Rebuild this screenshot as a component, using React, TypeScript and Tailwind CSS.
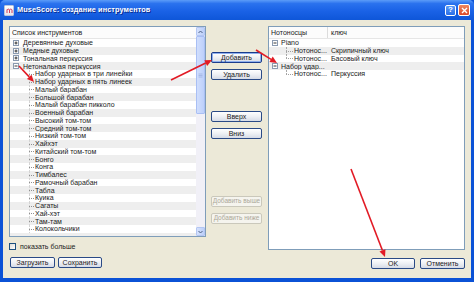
import React from "react";

const leftRows: { t: string; lvl: 0 | 1; box?: "+" | "-" }[] = [
  { t: "Деревянные духовые", lvl: 0, box: "+" },
  { t: "Медные духовые", lvl: 0, box: "+" },
  { t: "Тональная перкуссия", lvl: 0, box: "+" },
  { t: "Нетональная перкуссия", lvl: 0, box: "-" },
  { t: "Набор ударных в три линейки", lvl: 1 },
  { t: "Набор ударных в пять линеек", lvl: 1 },
  { t: "Малый барабан", lvl: 1 },
  { t: "Большой барабан", lvl: 1 },
  { t: "Малый барабан пикколо", lvl: 1 },
  { t: "Военный барабан", lvl: 1 },
  { t: "Высокий том-том", lvl: 1 },
  { t: "Средний том-том", lvl: 1 },
  { t: "Низкий том-том", lvl: 1 },
  { t: "Хайхэт", lvl: 1 },
  { t: "Китайский том-том", lvl: 1 },
  { t: "Бонго", lvl: 1 },
  { t: "Конга", lvl: 1 },
  { t: "Тимбалес", lvl: 1 },
  { t: "Рамочный барабан", lvl: 1 },
  { t: "Табла", lvl: 1 },
  { t: "Куика", lvl: 1 },
  { t: "Сагаты", lvl: 1 },
  { t: "Хай-хэт", lvl: 1 },
  { t: "Там-там", lvl: 1 },
  { t: "Колокольчики", lvl: 1 },
];

function ExpBox({ sign }: { sign: "+" | "-" }) {
  return (
    <svg width="6" height="6" viewBox="0 0 6 6" className="shrink-0">
      <rect x="0.5" y="0.5" width="5" height="5" fill="#fff" stroke="#8a9ab0" />
      <line x1="1.5" y1="3" x2="4.5" y2="3" stroke="#222" strokeWidth="0.9" />
      {sign === "+" && <line x1="3" y1="1.5" x2="3" y2="4.5" stroke="#222" strokeWidth="0.9" />}
    </svg>
  );
}

function XPButton({ label, w, disabled, focus }: { label: string; w: string; disabled?: boolean; focus?: boolean }) {
  if (disabled) {
    return (
      <div className={`${w} h-[11px] flex items-center justify-center rounded-[2px] border border-[#cac8bb] bg-[#f5f4ee] text-[6.5px] text-[#aca899] leading-none`}>
        {label}
      </div>
    );
  }
  return (
    <div
      className={`${w} h-[11px] flex items-center justify-center rounded-[2px] border ${
        focus ? "border-[#1a3c8c] shadow-[inset_0_0_0_1px_#8fb0ee]" : "border-[#2a4a86]"
      } bg-[linear-gradient(#ffffff,#eef0f4_50%,#d6dbe6)] text-[7px] text-[#222] leading-none`}
    >
      {label}
    </div>
  );
}

function Arrow({ x1, y1, x2, y2 }: { x1: number; y1: number; x2: number; y2: number }) {
  const dx = x2 - x1;
  const dy = y2 - y1;
  const len = Math.sqrt(dx * dx + dy * dy);
  const ux = dx / len;
  const uy = dy / len;
  const hl = 7;
  const hw = 3.2;
  const bx = x2 - ux * hl;
  const by = y2 - uy * hl;
  const p1 = `${x2},${y2}`;
  const p2 = `${bx - uy * hw},${by + ux * hw}`;
  const p3 = `${bx + uy * hw},${by - ux * hw}`;
  return (
    <g>
      <line x1={x1} y1={y1} x2={bx} y2={by} stroke="#e21b25" strokeWidth="1.6" />
      <polygon points={`${p1} ${p2} ${p3}`} fill="#e21b25" />
    </g>
  );
}

export default function App() {
  return (
    <div className="relative w-[474px] h-[282px] overflow-hidden flex flex-col bg-[#0b52d6] font-['Liberation_Sans',Arial,sans-serif]">
      {/* title bar */}
      <div className="h-[20px] shrink-0 flex items-center bg-[linear-gradient(#5c9cf8,#2a72ee_18%,#1a62e6_55%,#0e56d8)] rounded-t-[5px]">
        <div className="ml-[4px] w-[10px] h-[11px] rounded-[1px] bg-[linear-gradient(#ffffff,#e8e4ea)] border border-[#b9c4dc] flex items-center justify-center">
          <svg width="7" height="7" viewBox="0 0 7 7">
            <path d="M1 6V2.5M1 3c1-1.2 2-1.2 2.5 0V6M3.5 3c1-1.2 2-1.2 2.5 0V6" stroke="#d33a5a" strokeWidth="1" fill="none" />
          </svg>
        </div>
        <span className="ml-[3px] text-[7.3px] font-bold text-white tracking-[0.1px] [text-shadow:1px_1px_0_#0a2a8a]">
          MuseScore: создание инструментов
        </span>
        <div className="ml-auto mr-[4px] flex items-center gap-[2px]">
          <div className="w-[11px] h-[11px] rounded-[2px] border border-white bg-[linear-gradient(#5a9af8,#2a6ee8)] flex items-center justify-center text-white text-[8px] font-bold leading-none">
            ?
          </div>
          <div className="w-[12px] h-[12px] rounded-[2px] border border-white bg-[linear-gradient(#f08860,#d8482a)] flex items-center justify-center">
            <svg width="7" height="7" viewBox="0 0 7 7">
              <path d="M1 1L6 6M6 1L1 6" stroke="#fff" strokeWidth="1.4" />
            </svg>
          </div>
        </div>
      </div>

      {/* body */}
      <div className="flex-1 mx-[3px] mb-[4px] bg-[#ece9d8] flex pt-[6px] px-[6px] text-[7px] text-[#222]">
        {/* left column */}
        <div className="w-[197px] flex flex-col">
          <div className="h-[211px] border border-[#7f9db9] bg-white flex overflow-hidden">
            <div className="flex-1 flex flex-col overflow-hidden">
              <div className="h-[12px] shrink-0 flex items-center pl-[2px] border-b border-[#e6e6e6] bg-[#fcfcfc] leading-none">
                Список инструментов
              </div>
              {leftRows.map((r, i) => (
                <div
                  key={i}
                  className={`h-[7.75px] shrink-0 flex items-center leading-none whitespace-nowrap relative ${
                    i % 2 === 1 ? "bg-[#eeeeee]" : "bg-white"
                  }`}
                >
                  {r.lvl === 0 ? (
                    <>
                      <div className="w-[13px] shrink-0 flex items-center pl-[3px]">
                        <ExpBox sign={r.box!} />
                      </div>
                      <span>{r.t}</span>
                    </>
                  ) : (
                    <>
                      <div className="w-[25px] h-full shrink-0 relative">
                        <span className="absolute left-[19px] top-0 h-full border-l border-dotted border-[#d4d4d4]" />
                        <span className="absolute left-[19px] top-1/2 w-[5px] border-t border-dotted border-[#909090]" />
                      </div>
                      <span>{r.t}</span>
                    </>
                  )}
                </div>
              ))}
              <div className="h-[7.75px] shrink-0 bg-[#eeeeee]" />
            </div>
            {/* scrollbar */}
            <div className="w-[9px] shrink-0 bg-[#f1f0f7] flex flex-col">
              <div className="h-[9px] shrink-0 bg-[linear-gradient(90deg,#d5e1fd,#bccff9)] border border-[#b3c6f3] rounded-[1px] flex items-center justify-center">
                <svg width="5" height="4" viewBox="0 0 5 4">
                  <path d="M0.5 3L2.5 1L4.5 3" stroke="#4d6185" strokeWidth="1" fill="none" />
                </svg>
              </div>
              <div className="h-[78px] shrink-0 bg-[linear-gradient(90deg,#d0defd,#bdd0fb)] border border-[#a9bff4] rounded-[1px] flex items-center justify-center">
                <svg width="5" height="5" viewBox="0 0 5 5">
                  <path d="M0.5 1H4.5M0.5 2.5H4.5M0.5 4H4.5" stroke="#9fb3e2" strokeWidth="0.8" />
                </svg>
              </div>
              <div className="flex-1" />
              <div className="h-[9px] shrink-0 bg-[linear-gradient(90deg,#d5e1fd,#bccff9)] border border-[#b3c6f3] rounded-[1px] flex items-center justify-center">
                <svg width="5" height="4" viewBox="0 0 5 4">
                  <path d="M0.5 1L2.5 3L4.5 1" stroke="#4d6185" strokeWidth="1" fill="none" />
                </svg>
              </div>
            </div>
          </div>
          <div className="mt-[6px] h-[7px] flex items-center gap-[4px]">
            <div className="w-[7px] h-[7px] border border-[#1c5180] bg-[linear-gradient(135deg,#dcdcd6,#ffffff)]" />
            <span className="leading-none">показать больше</span>
          </div>
          <div className="mt-[7px] flex gap-[3px] pl-[1px]">
            <XPButton label="Загрузить" w="w-[45px]" />
            <XPButton label="Сохранить" w="w-[44px]" />
          </div>
        </div>

        {/* middle column */}
        <div className="w-[62px] flex flex-col pl-[5px]">
          <div className="mt-[26px]">
            <XPButton label="Добавить" w="w-[51px]" focus />
          </div>
          <div className="mt-[6px]">
            <XPButton label="Удалить" w="w-[51px]" />
          </div>
          <div className="mt-[31px]">
            <XPButton label="Вверх" w="w-[51px]" />
          </div>
          <div className="mt-[6px]">
            <XPButton label="Вниз" w="w-[51px]" />
          </div>
          <div className="mt-[57px]">
            <XPButton label="Добавить выше" w="w-[51px]" disabled />
          </div>
          <div className="mt-[6px]">
            <XPButton label="Добавить ниже" w="w-[51px]" disabled />
          </div>
        </div>

        {/* right column */}
        <div className="w-[197px] flex flex-col">
          <div className="h-[224px] border border-[#7f9db9] bg-white flex flex-col overflow-hidden">
            <div className="h-[12px] shrink-0 flex items-center border-b border-[#e6e6e6] bg-[#fcfcfc] leading-none">
              <div className="w-[59px] h-full flex items-center pl-[2px] border-r border-[#dcdcdc]">Нотоносцы</div>
              <div className="pl-[3px]">ключ</div>
            </div>
            {[
              { a: "Piano", b: "", lvl: 0, i: 0 },
              { a: "Нотонос...", b: "Скрипичный ключ", lvl: 1, i: 1, last: false },
              { a: "Нотонос...", b: "Басовый ключ", lvl: 1, i: 2, last: true },
              { a: "Набор удар...", b: "", lvl: 0, i: 3 },
              { a: "Нотонос...", b: "Перкуссия", lvl: 1, i: 4, last: true },
            ].map((r) => (
              <div
                key={r.i}
                className={`h-[7.75px] shrink-0 flex items-center leading-none whitespace-nowrap ${
                  r.i % 2 === 1 ? "bg-[#eeeeee]" : "bg-white"
                }`}
              >
                <div className="w-[60px] shrink-0 h-full flex items-center">
                  {r.lvl === 0 ? (
                    <>
                      <div className="w-[12px] shrink-0 flex items-center pl-[3px]">
                        <ExpBox sign="-" />
                      </div>
                      <span>{r.a}</span>
                    </>
                  ) : (
                    <>
                      <div className="w-[25px] h-full shrink-0 relative">
                        <span
                          className={`absolute left-[17px] top-0 border-l border-dotted border-[#a8a8a8] ${
                            r.last ? "h-1/2" : "h-full"
                          }`}
                        />
                        <span className="absolute left-[17px] top-1/2 w-[7px] border-t border-dotted border-[#a0a0a0]" />
                      </div>
                      <span>{r.a}</span>
                    </>
                  )}
                </div>
                <span className="pl-[2px]">{r.b}</span>
              </div>
            ))}
          </div>
          <div className="mt-[8px] flex justify-end gap-[5px]">
            <XPButton label="OK" w="w-[44px]" />
            <XPButton label="Отменить" w="w-[45px]" />
          </div>
        </div>
      </div>

      {/* red annotation arrows */}
      <svg className="absolute inset-0 pointer-events-none" width="474" height="282" viewBox="0 0 474 282">
        <Arrow x1={19} y1={66} x2={34} y2={82} />
        <Arrow x1={171} y1={80} x2={212} y2={60} />
        <Arrow x1={256} y1={50} x2={277} y2={63} />
        <Arrow x1={351} y1={169} x2={385} y2={257} />
      </svg>
    </div>
  );
}
